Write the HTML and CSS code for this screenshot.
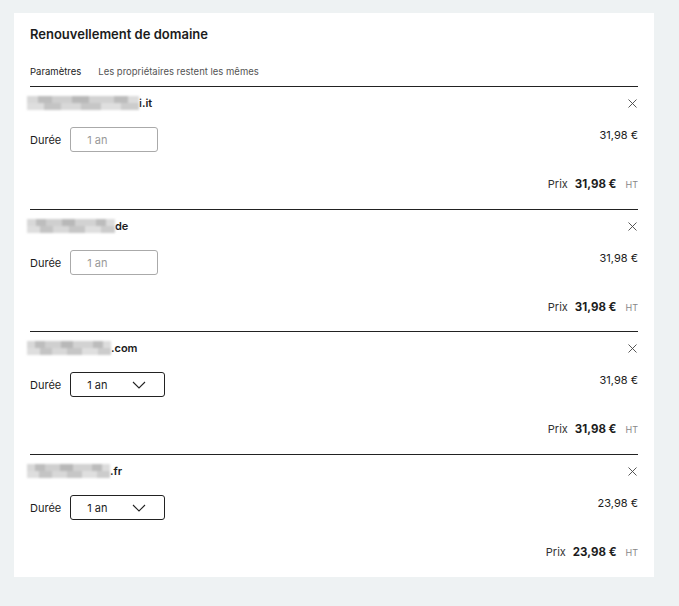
FILE: index.html
```html
<!DOCTYPE html>
<html>
    <head>
        <meta charset="UTF-8">
        <title>Renouvellement de domaine</title>
        <link rel="stylesheet" href="styles.css">
    </head>
    <body>
        <div class="card">
            <h1 class="card-title">Renouvellement de domaine</h1>

            <div class="tabs">
                <span class="tab">Paramètres</span>
                <span class="tab tab-muted">Les propriétaires restent les mêmes</span>
            </div>

            <!-- domaine .it -->
            <div class="domain">
                <div class="domain-head">
                    <span class="domain-name"><span class="masked w1"></span>i.it</span>
                    <svg class="close" width="9" height="9" viewBox="0 0 9 9"><path d="M0.5 0.5L8.5 8.5M8.5 0.5L0.5 8.5" stroke="#444" stroke-width="0.9"/></svg>
                </div>
                <div class="domain-body">
                    <div class="field">
                        <span class="label">Durée</span>
                        <div class="input disabled">1 an</div>
                    </div>
                    <span class="amount">31,98 €</span>
                </div>
                <div class="total">
                    <span class="total-label">Prix</span>
                    <span class="total-value">31,98 €</span>
                    <span class="total-tax">HT</span>
                </div>
            </div>

            <!-- domaine .de -->
            <div class="domain short">
                <div class="domain-head">
                    <span class="domain-name"><span class="masked w2"></span>de</span>
                    <svg class="close" width="9" height="9" viewBox="0 0 9 9"><path d="M0.5 0.5L8.5 8.5M8.5 0.5L0.5 8.5" stroke="#444" stroke-width="0.9"/></svg>
                </div>
                <div class="domain-body">
                    <div class="field">
                        <span class="label">Durée</span>
                        <div class="input disabled">1 an</div>
                    </div>
                    <span class="amount">31,98 €</span>
                </div>
                <div class="total">
                    <span class="total-label">Prix</span>
                    <span class="total-value">31,98 €</span>
                    <span class="total-tax">HT</span>
                </div>
            </div>

            <!-- domaine .com -->
            <div class="domain">
                <div class="domain-head">
                    <span class="domain-name"><span class="masked w3"></span>.com</span>
                    <svg class="close" width="9" height="9" viewBox="0 0 9 9"><path d="M0.5 0.5L8.5 8.5M8.5 0.5L0.5 8.5" stroke="#444" stroke-width="0.9"/></svg>
                </div>
                <div class="domain-body">
                    <div class="field">
                        <span class="label">Durée</span>
                        <div class="input select">
                            <span>1 an</span>
                            <svg width="14" height="8" viewBox="0 0 14 8"><path d="M1 1L7 7L13 1" fill="none" stroke="#222" stroke-width="1.1"/></svg>
                        </div>
                    </div>
                    <span class="amount">31,98 €</span>
                </div>
                <div class="total">
                    <span class="total-label">Prix</span>
                    <span class="total-value">31,98 €</span>
                    <span class="total-tax">HT</span>
                </div>
            </div>

            <!-- domaine .fr -->
            <div class="domain">
                <div class="domain-head">
                    <span class="domain-name"><span class="masked w4"></span>.fr</span>
                    <svg class="close" width="9" height="9" viewBox="0 0 9 9"><path d="M0.5 0.5L8.5 8.5M8.5 0.5L0.5 8.5" stroke="#444" stroke-width="0.9"/></svg>
                </div>
                <div class="domain-body">
                    <div class="field">
                        <span class="label">Durée</span>
                        <div class="input select">
                            <span>1 an</span>
                            <svg width="14" height="8" viewBox="0 0 14 8"><path d="M1 1L7 7L13 1" fill="none" stroke="#222" stroke-width="1.1"/></svg>
                        </div>
                    </div>
                    <span class="amount">23,98 €</span>
                </div>
                <div class="total">
                    <span class="total-label">Prix</span>
                    <span class="total-value">23,98 €</span>
                    <span class="total-tax">HT</span>
                </div>
            </div>
        </div>
    </body>
</html>
```

FILE: styles.css
```css
* {
    box-sizing: border-box;
    font-family: "Inter", "Liberation Sans", Arial, sans-serif;
}

body {
    margin: 0;
    background-color: #eef2f3;
    color: #1c1c1c;
}

.card {
    margin: 13px 0 0 14px;
    width: 640px;
    padding: 12px 16px 0 16px;
    background-color: #fff;
}

.card-title {
    margin: 0;
    font-size: 13px;
    line-height: 18px;
    font-weight: 600;
}

.tabs {
    display: flex;
    gap: 17px;
    margin-top: 22px;
    padding-bottom: 7px;
    font-size: 9.5px;
    line-height: 14px;
}

.tab-muted { color: #555; }

.domain {
    border-top: 1px solid #222;
    padding: 9px 0 18px 0;
}

.domain.short { padding-bottom: 17px; }

.domain-head {
    display: flex;
    justify-content: space-between;
    align-items: center;
    height: 14px;
}

.domain-name {
    display: flex;
    align-items: center;
    font-size: 11px;
    font-weight: 600;
    line-height: 14px;
}

/* nom de domaine flouté */
.masked {
    display: inline-block;
    height: 14px;
    margin-left: -3px;
    background:
        linear-gradient(90deg, #d8d8d8 0 10%, #bdbdbd 10% 22%, #cfcfcf 22% 40%, #b8b8b8 40% 55%, #d2d2d2 55% 78%, #bcbcbc 78% 90%, #dcdcdc 90%) top / 100% 50% no-repeat,
        linear-gradient(90deg, #dedede 0 15%, #c4c4c4 15% 30%, #d8d8d8 30% 48%, #c6c6c6 48% 66%, #dfdfdf 66% 84%, #cccccc 84%) bottom / 100% 50% no-repeat;
    filter: blur(0.8px);
}

.w1 { width: 112px; }
.w2 { width: 88px; }
.w3 { width: 84px; }
.w4 { width: 83px; }

.close { margin-right: 1px; }

.domain-body {
    display: flex;
    justify-content: space-between;
    align-items: flex-start;
    margin-top: 17px;
}

.field {
    display: flex;
    align-items: center;
    gap: 9px;
}

.label {
    font-size: 11px;
}

.input {
    height: 25px;
    border-radius: 3px;
    font-size: 11px;
    display: flex;
    align-items: center;
    padding-left: 16px;
}

.input.disabled {
    width: 88px;
    border: 1px solid #aaa;
    color: #999;
}

.input.select {
    width: 95px;
    border: 1px solid #222;
    justify-content: space-between;
    padding-right: 18px;
    color: #1c1c1c;
}

.amount {
    margin-top: 1px;
    font-size: 11px;
    line-height: 14px;
}

.total {
    display: flex;
    justify-content: flex-end;
    align-items: baseline;
    gap: 7px;
    margin-top: 25px;
    height: 14px;
    line-height: 14px;
}

.total-label { font-size: 11px; color: #333; }
.total-value { font-size: 11.5px; font-weight: 700; }
.total-tax { font-size: 9px; color: #888; margin-left: 2px; }
```
